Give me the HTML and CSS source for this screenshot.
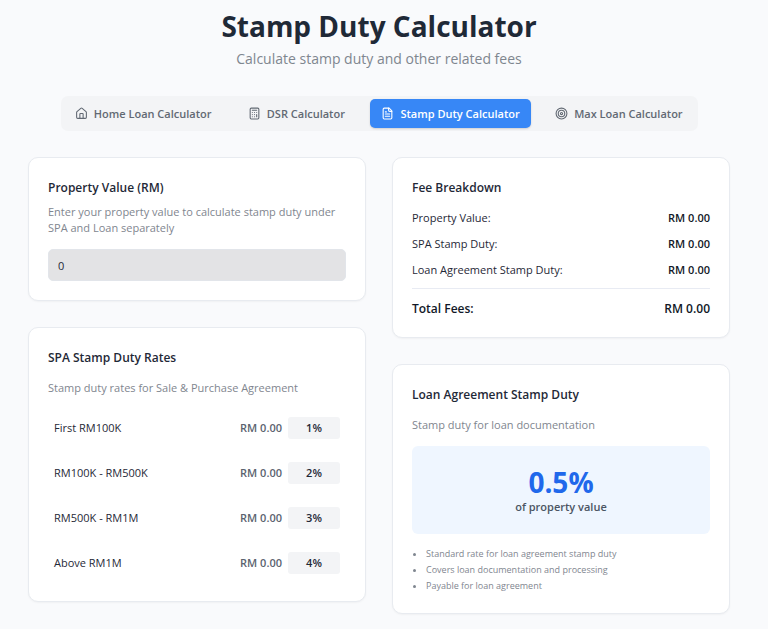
FILE: index.html
```html
<!DOCTYPE html>
<html lang="en">
<head>
<meta charset="utf-8">
<meta name="viewport" content="width=device-width, initial-scale=1">
<title>Stamp Duty Calculator</title>
<link rel="stylesheet" href="styles.css">
</head>
<body>
<main class="page">
  <header class="page-header">
    <h1>Stamp Duty Calculator</h1>
    <p>Calculate stamp duty and other related fees</p>
  </header>

  <nav class="tabs">
    <button type="button" class="tab">
      <svg class="icon" viewBox="0 0 24 24" aria-hidden="true"><path d="M15 21v-8a1 1 0 0 0-1-1h-4a1 1 0 0 0-1 1v8"/><path d="M3 10a2 2 0 0 1 .709-1.528l7-5.999a2 2 0 0 1 2.582 0l7 5.999A2 2 0 0 1 21 10v9a2 2 0 0 1-2 2H5a2 2 0 0 1-2-2z"/></svg>
      Home Loan Calculator
    </button>
    <button type="button" class="tab">
      <svg class="icon" viewBox="0 0 24 24" aria-hidden="true"><rect width="16" height="20" x="4" y="2" rx="2"/><path d="M8 6h8M16 14v4M16 10h.01M12 10h.01M8 10h.01M12 14h.01M8 14h.01M12 18h.01M8 18h.01"/></svg>
      DSR Calculator
    </button>
    <button type="button" class="tab tab-active" aria-current="page">
      <svg class="icon" viewBox="0 0 24 24" aria-hidden="true"><path d="M15 2H6a2 2 0 0 0-2 2v16a2 2 0 0 0 2 2h12a2 2 0 0 0 2-2V7Z"/><path d="M14 2v4a2 2 0 0 0 2 2h4M10 9H8M16 13H8M16 17H8"/></svg>
      Stamp Duty Calculator
    </button>
    <button type="button" class="tab">
      <svg class="icon" viewBox="0 0 24 24" aria-hidden="true"><circle cx="12" cy="12" r="10"/><circle cx="12" cy="12" r="6"/><circle cx="12" cy="12" r="2"/></svg>
      Max Loan Calculator
    </button>
  </nav>

  <div class="columns">
    <div class="column">
      <section class="card">
        <h2><label for="property-value">Property Value (RM)</label></h2>
        <p class="hint">Enter your property value to calculate stamp duty under SPA and Loan separately</p>
        <input id="property-value" class="amount-input" type="text" inputmode="numeric" value="0">
      </section>

      <section class="card">
        <h2>SPA Stamp Duty Rates</h2>
        <p class="description">Stamp duty rates for Sale &amp; Purchase Agreement</p>
        <ul class="rates">
          <li><span>First RM100K</span><span class="rate-amount">RM 0.00</span><span class="rate-badge">1%</span></li>
          <li><span>RM100K - RM500K</span><span class="rate-amount">RM 0.00</span><span class="rate-badge">2%</span></li>
          <li><span>RM500K - RM1M</span><span class="rate-amount">RM 0.00</span><span class="rate-badge">3%</span></li>
          <li><span>Above RM1M</span><span class="rate-amount">RM 0.00</span><span class="rate-badge">4%</span></li>
        </ul>
      </section>
    </div>

    <div class="column">
      <section class="card">
        <h2>Fee Breakdown</h2>
        <dl class="fees">
          <div><dt>Property Value:</dt><dd>RM 0.00</dd></div>
          <div><dt>SPA Stamp Duty:</dt><dd>RM 0.00</dd></div>
          <div><dt>Loan Agreement Stamp Duty:</dt><dd>RM 0.00</dd></div>
          <div class="total"><dt>Total Fees:</dt><dd>RM 0.00</dd></div>
        </dl>
      </section>

      <section class="card">
        <h2>Loan Agreement Stamp Duty</h2>
        <p class="description">Stamp duty for loan documentation</p>
        <div class="highlight">
          <strong>0.5%</strong>
          <span>of property value</span>
        </div>
        <ul class="notes">
          <li>Standard rate for loan agreement stamp duty</li>
          <li>Covers loan documentation and processing</li>
          <li>Payable for loan agreement</li>
        </ul>
      </section>
    </div>
  </div>
</main>
</body>
</html>
```
FILE: styles.css
```css
* {
  box-sizing: border-box;
}

body,
h1,
h2,
p,
ul,
dl,
dd {
  margin: 0;
  padding: 0;
}

body {
  background: #f9fafc;
  color: #1f2937;
  font-family: "Segoe UI", "Open Sans", "Noto Sans", sans-serif;
  font-size: 11px;
  line-height: 16px;
}

.page {
  padding: 6px 38px 16px 28px;
}

.page-header {
  text-align: center;
}

h1 {
  font-size: 28px;
  font-weight: 700;
  line-height: 40px;
}

.page-header p {
  margin-top: 2px;
  color: #7f868f;
  font-size: 14px;
  line-height: 22px;
}

.tabs {
  display: grid;
  grid-template-columns: 159fr 123fr 161fr 151fr;
  gap: 12px;
  max-width: 637px;
  margin: 26px auto;
  padding: 3px;
  border-radius: 7px;
  background: #f3f4f6;
}

.tab {
  display: flex;
  align-items: center;
  justify-content: center;
  gap: 6px;
  height: 29px;
  padding: 0;
  border: 0;
  border-radius: 5px;
  background: transparent;
  color: #626973;
  font: inherit;
  font-weight: 600;
  white-space: nowrap;
}

.tab-active {
  background: #3787f6;
  box-shadow: 0 1px 2px rgb(0 0 0 / 15%);
  color: #fff;
}

.icon {
  flex: none;
  width: 13px;
  height: 13px;
  fill: none;
  stroke: currentColor;
  stroke-width: 2;
  stroke-linecap: round;
  stroke-linejoin: round;
}

.columns {
  display: grid;
  grid-template-columns: 1fr 1fr;
  align-items: start;
  gap: 26px;
}

.column {
  display: grid;
  gap: 26px;
}

.card {
  padding: 19px;
  border: 1px solid #e8ebf0;
  border-radius: 10px;
  background: #fff;
  box-shadow: 0 1px 2px rgb(0 0 0 / 4%);
}

h2 {
  font-size: 12px;
  font-weight: 600;
  line-height: 22px;
}

.hint,
.description {
  color: #7f868f;
}

.hint {
  margin-top: 5px;
}

.description {
  margin-top: 11px;
}

.amount-input {
  display: block;
  width: 100%;
  height: 32px;
  margin-top: 13px;
  padding: 0 9px;
  border: 1px solid #e2e5ea;
  border-radius: 5px;
  background: #e3e3e5;
  color: #1f2937;
  font: inherit;
}

.rates {
  display: grid;
  gap: 6px;
  margin-top: 12px;
  list-style: none;
}

.rates li {
  display: flex;
  align-items: center;
  gap: 6px;
  height: 39px;
  padding: 0 6px;
}

.rate-amount {
  margin-left: auto;
  color: #5b636f;
  font-weight: 600;
}

.rate-badge {
  width: 52px;
  border-radius: 3px;
  background: #f3f4f6;
  font-weight: 600;
  line-height: 22px;
  text-align: center;
}

.fees {
  display: grid;
  gap: 10px;
  margin-top: 11px;
}

.fees div {
  display: flex;
  justify-content: space-between;
}

.fees dd {
  color: #111827;
  font-weight: 600;
}

.fees .total {
  padding-top: 10px;
  border-top: 1px solid #e8ebf3;
  color: #111827;
  font-size: 12px;
  font-weight: 600;
  line-height: 19px;
}

.highlight {
  display: grid;
  margin-top: 13px;
  padding: 19px;
  border-radius: 6px;
  background: #eff6ff;
  text-align: center;
}

.highlight strong {
  color: #2068eb;
  font-size: 28px;
  font-weight: 700;
  line-height: 34px;
}

.highlight span {
  color: #4b5563;
  font-weight: 600;
}

.notes {
  margin-top: 12px;
  padding-left: 14px;
  color: #7f868f;
  font-size: 9px;
}
```
